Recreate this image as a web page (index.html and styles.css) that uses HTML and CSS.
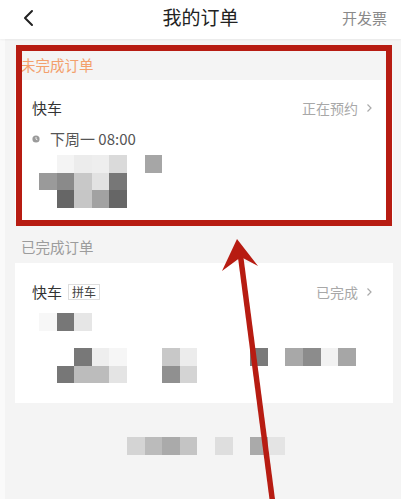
FILE: index.html
```html
<!DOCTYPE html>
<html lang="zh-CN">
<head>
<meta charset="utf-8">
<title>我的订单</title>
<link rel="stylesheet" href="styles.css">
</head>
<body>
<div class="screen">
  <header class="topbar">
    <div class="back">
      <svg width="14" height="18" viewBox="0 0 14 18"><polyline points="10,2 3,9 10,16" fill="none" stroke="#222" stroke-width="2" stroke-linecap="round" stroke-linejoin="round"/></svg>
    </div>
    <h1 class="title">我的订单</h1>
    <div class="invoice">开发票</div>
  </header>

  <main class="content">
    <div class="label label-pending">未完成订单</div>
    <section class="card card-pending">
      <div class="row-title">
        <span class="kind">快车</span>
        <span class="status">正在预约<svg class="chev" width="7" height="10" viewBox="0 0 7 10"><polyline points="1.5,1.5 5,5 1.5,8.5" fill="none" stroke="#aaa" stroke-width="1.2"/></svg></span>
      </div>
      <div class="row-time">
        <svg class="clock" width="8" height="8" viewBox="0 0 8 8"><circle cx="4" cy="4" r="3.6" fill="#9a9a9a"/><polyline points="4,2 4,4.2 5.4,4.8" fill="none" stroke="#fff" stroke-width="0.8"/></svg>
        <span class="time">下周一 08:00</span>
      </div>
      <div class="mosaic m1">
        <div class="mrow"><i></i><i class="s244"></i><i class="s236"></i><i class="s238"></i><i class="s218"></i><i></i><i class="s166"></i></div>
        <div class="mrow"><i class="s154"></i><i class="s138"></i><i class="s200"></i><i class="s226"></i><i class="s119"></i></div>
        <div class="mrow"><i></i><i class="s102"></i><i class="s198"></i><i class="s162"></i><i class="s102"></i></div>
      </div>
    </section>

    <div class="label label-done">已完成订单</div>
    <section class="card card-done">
      <div class="row-title">
        <span class="kind">快车<span class="tag">拼车</span></span>
        <span class="status">已完成<svg class="chev" width="7" height="10" viewBox="0 0 7 10"><polyline points="1.5,1.5 5,5 1.5,8.5" fill="none" stroke="#aaa" stroke-width="1.2"/></svg></span>
      </div>
      <div class="mosaic m2">
        <div class="mrow"><i class="s247"></i><i class="s119"></i><i class="s230"></i></div>
        <div class="mrow"></div>
        <div class="mrow"><i></i><i></i><i class="s120"></i><i class="s238"></i><i class="s246"></i><i></i><i></i><i class="s200"></i><i class="s236"></i><i></i><i></i><i></i><i class="s122"></i><i></i><i class="s168"></i><i class="s140"></i><i class="s242"></i><i class="s166"></i></div>
        <div class="mrow"><i></i><i class="s119"></i><i class="s188"></i><i class="s188"></i><i class="s228"></i><i></i><i></i><i class="s144"></i><i class="s212"></i></div>
      </div>
    </section>

    <div class="mosaic m3">
      <div class="mrow"><i></i><i></i><i></i><i></i><i></i><i class="s212"></i><i class="s187"></i><i class="s170"></i><i class="s196"></i><i></i><i class="s222"></i><i></i><i class="s170"></i><i class="s228"></i></div>
    </div>
  </main>

  <div class="highlight"></div>
  <svg class="arrow" width="401" height="499" viewBox="0 0 401 499">
    <line x1="240" y1="252" x2="273" y2="505" stroke="#b71c12" stroke-width="5.5"/>
    <polygon points="237,239 258,266 241,257 222,271" fill="#b71c12"/>
  </svg>
</div>
</body>
</html>
```

FILE: styles.css
```css
* { box-sizing: border-box; }
html, body {
  margin: 0;
  padding: 0;
  background: #fafafa;
  font-family: "Noto Sans CJK SC", "Noto Sans", "Liberation Sans", sans-serif;
}
.screen {
  position: relative;
  width: 401px;
  height: 499px;
  overflow: hidden;
}
.topbar {
  height: 39px;
  background: #fff;
  display: grid;
  grid-template-columns: 1fr auto 1fr;
  align-items: center;
  box-shadow: 0 1px 2px rgba(0, 0, 0, 0.05);
  position: relative;
  z-index: 1;
}
.back {
  padding-left: 22px;
  display: flex;
  align-items: center;
  margin-top: -4px;
}
.title {
  margin: -5px 0 0 0;
  font-size: 19px;
  font-weight: 400;
  color: #222;
  line-height: 24px;
}
.invoice {
  justify-self: end;
  padding-right: 14px;
  margin-top: -4px;
  font-size: 15px;
  color: #8a8a8a;
}
.content {
  margin-left: 5px;
  background: #f4f4f4;
  height: 460px;
}
.label {
  font-size: 14.5px;
  line-height: 16px;
}
.label-pending {
  color: #f3a06c;
  padding: 18px 0 7px 16px;
}
.label-done {
  color: #9c9c9c;
  padding: 19px 0 8px 16px;
}
.card {
  background: #fff;
  margin: 0 8px 0 10px;
  height: 140px;
  padding-left: 17px;
}
.card-pending { padding-top: 18px; }
.card-done { padding-top: 19px; }
.row-title {
  display: flex;
  justify-content: space-between;
  align-items: center;
  line-height: 20px;
  padding-right: 20px;
}
.kind {
  font-size: 15px;
  color: #333;
  display: flex;
  align-items: center;
}
.tag {
  font-size: 12px;
  line-height: 14px;
  color: #444;
  border: 1px solid #dedede;
  padding: 0 3px;
  margin-left: 6px;
}
.status {
  font-size: 14px;
  color: #a8a8a8;
  display: flex;
  align-items: center;
}
.chev { margin-left: 8px; }
.row-time {
  margin-top: 12px;
  display: flex;
  align-items: center;
  line-height: 18px;
}
.clock { margin-right: 10px; margin-left: 0; }
.time {
  font-size: 15px;
  color: #555;
}
.mosaic .mrow {
  display: flex;
  height: 17.5px;
}
.mosaic i {
  display: block;
  width: 17.6px;
  height: 17.5px;
  flex: none;
}
.m1 { margin: 7px 0 0 7px; }
.m2 { margin: 11px 0 0 7px; }
.m3 { margin: 34px 0 0 34px; }
.s102 { background: #666; }
.s119 { background: #777; }
.s120 { background: #787878; }
.s122 { background: #7a7a7a; }
.s138 { background: #8a8a8a; }
.s140 { background: #8c8c8c; }
.s144 { background: #909090; }
.s154 { background: #9a9a9a; }
.s162 { background: #a2a2a2; }
.s166 { background: #a6a6a6; }
.s168 { background: #a8a8a8; }
.s170 { background: #aaaaaa; }
.s187 { background: #bbbbbb; }
.s188 { background: #bcbcbc; }
.s196 { background: #c4c4c4; }
.s198 { background: #c6c6c6; }
.s200 { background: #c8c8c8; }
.s212 { background: #d4d4d4; }
.s218 { background: #dadada; }
.s222 { background: #dedede; }
.s226 { background: #e2e2e2; }
.s228 { background: #e4e4e4; }
.s230 { background: #e6e6e6; }
.s236 { background: #ececec; }
.s238 { background: #eeeeee; }
.s242 { background: #f2f2f2; }
.s244 { background: #f4f4f4; }
.s246 { background: #f6f6f6; }
.s247 { background: #f7f7f7; }
.highlight {
  position: absolute;
  left: 16px;
  top: 45px;
  width: 376px;
  height: 181px;
  border: 6px solid #b71c12;
  z-index: 2;
}
.arrow {
  position: absolute;
  left: 0;
  top: 0;
  z-index: 3;
}
```
